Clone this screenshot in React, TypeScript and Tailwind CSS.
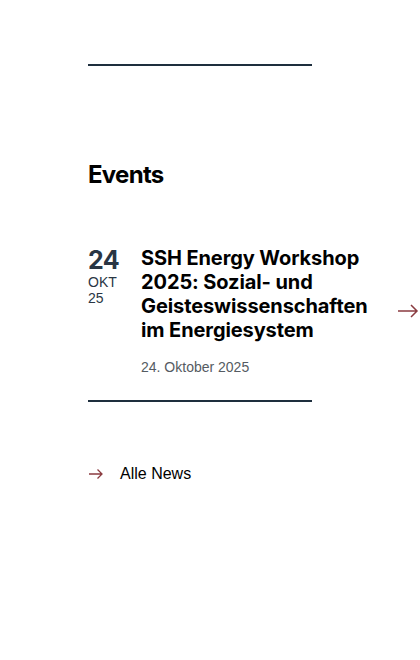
export default function App() {
  return (
    <div className="min-h-[660px] w-[420px] overflow-hidden bg-white font-['Inter',sans-serif]">
      <div className="pl-[88px] pt-[64px]">
        <div className="h-[2px] w-[224px] bg-[#1e2f3e]" />

        <h2 className="mt-[94px] text-[24px] font-bold leading-[30px] tracking-[-0.03em] text-black">
          Events
        </h2>

        <a href="#" className="mt-[56px] flex w-[332px] items-start">
          <div className="w-[53px] shrink-0 text-[#2a3644]">
            <div className="text-[25px] font-bold leading-[28px] tracking-[-0.02em]">24</div>
            <div className="font-['Liberation_Sans',sans-serif] text-[14px] leading-[16px]">OKT</div>
            <div className="font-['Liberation_Sans',sans-serif] text-[14px] leading-[16px]">25</div>
          </div>
          <div className="w-[240px] shrink-0">
            <h3 className="text-[20px] font-bold leading-[24px] tracking-[-0.005em] text-black">
              SSH Energy Workshop 2025: Sozial- und Geisteswissenschaften im Energiesystem
            </h3>
            <p className="mt-[16px] font-['Liberation_Sans',sans-serif] text-[14px] leading-[18px] text-[#555b62]">
              24. Oktober 2025
            </p>
          </div>
          <svg
            className="ml-[16px] mt-[58px] shrink-0"
            width="22"
            height="14"
            viewBox="0 0 22 14"
            fill="none"
            stroke="#8a3b40"
            strokeWidth="1.5"
          >
            <path d="M1 7h19M14 1l6 6-6 6" />
          </svg>
        </a>

        <div className="mt-[24px] h-[2px] w-[224px] bg-[#1e2f3e]" />

        <a href="#" className="mt-[62px] flex items-center">
          <svg width="16" height="12" viewBox="0 0 16 12" fill="none" stroke="#8a3b40" strokeWidth="1.3">
            <path d="M1 6h13M9.5 1.5 14 6l-4.5 4.5" />
          </svg>
          <span className="ml-[16px] font-['Liberation_Sans',sans-serif] text-[16px] leading-[20px] text-black">
            Alle News
          </span>
        </a>
      </div>
    </div>
  );
}
